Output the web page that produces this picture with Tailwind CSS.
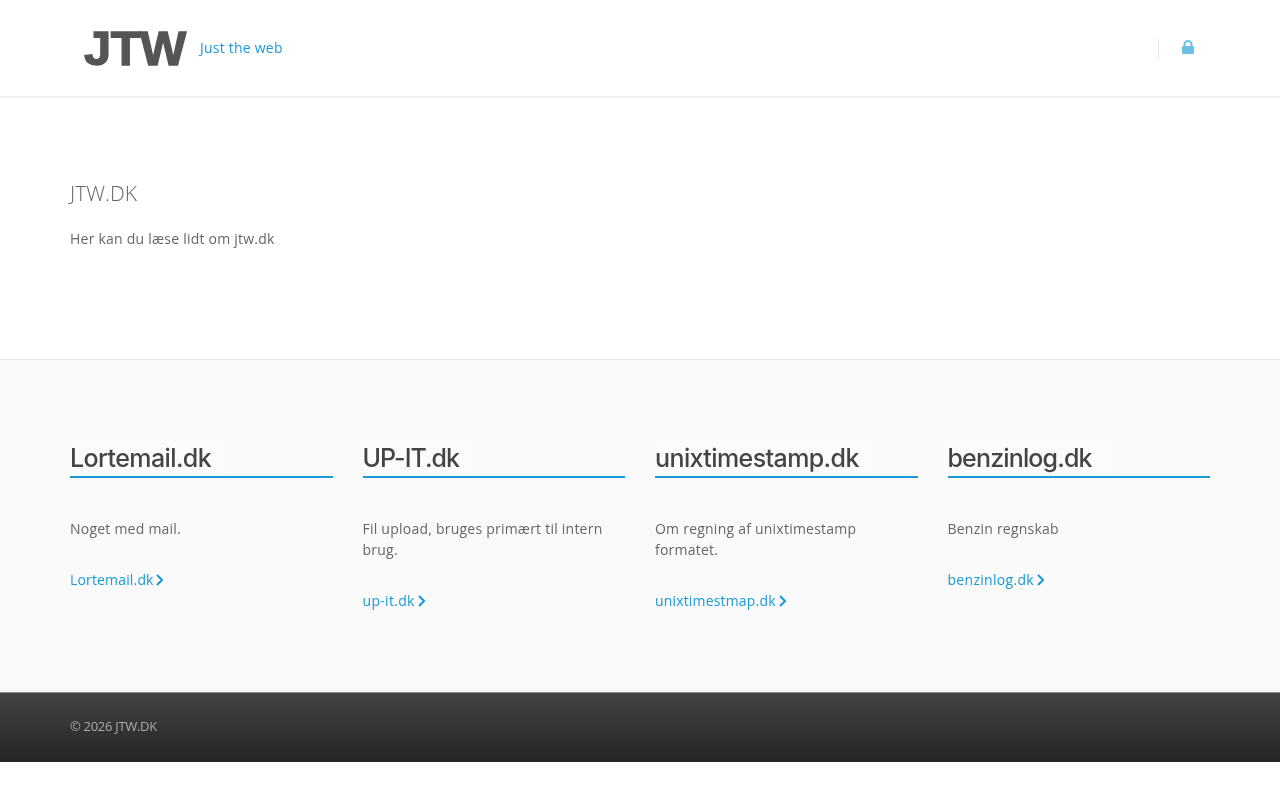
<!DOCTYPE html>
<html lang="da">
<head>
<meta charset="utf-8">
<title>JTW.DK</title>
<script src="https://cdn.jsdelivr.net/npm/@tailwindcss/browser@4"></script>
</head>
<body class="bg-white font-['Open_Sans',sans-serif] text-[14px] leading-[21px] tracking-[0.23px] text-[#666] transform-gpu opacity-[0.999]">
<header class="h-[98px] border-b-2 border-[#f1f1f1] bg-white">
  <div class="mx-auto flex h-[96px] w-[1140px] items-center">
    <span class="ml-[14px] w-[116px] font-['Liberation_Sans',sans-serif] text-[49px] leading-none font-bold tracking-[-0.6px] text-[#555] [-webkit-text-stroke:1.3px_#555]">JTW</span>
    <span class="mb-[2px] text-[#1a9ad6]">Just the web</span>
    <div class="ml-auto mr-[16px] flex h-[20px] translate-y-[1px] items-center border-l border-[#e5e5e5] pl-[23px]">
      <svg class="mb-[4px] h-[14px] w-[12px]" viewBox="0 0 12 14" fill="#6dbfe6"><path d="M1.5 7V4.5a4.5 4.5 0 0 1 9 0V7h-2V4.5a2.5 2.5 0 0 0-5 0V7z"/><rect x="0" y="6" width="12" height="8" rx="1"/></svg>
    </div>
  </div>
</header>
<main class="mx-auto h-[261px] w-[1140px] pt-[80px]">
  <h1 class="text-[21px] leading-[30px] font-light tracking-normal text-[#666]">JTW.DK</h1>
  <p class="mt-[20px]">Her kan du læse lidt om jtw.dk</p>
</main>
<section class="h-[333px] border-t border-[#e5e5e5] bg-[#fafafa]">
  <div class="mx-auto grid w-[1140px] grid-cols-4 gap-x-[30px] pt-[79px]">
    <div>
      <h3 class="border-b-2 border-[#1a9ad6] text-[25px] leading-[35px] font-medium tracking-[-0.6px] text-[#444] font-['Inter',sans-serif]"><span class="inline-block bg-[#fbfbfb] pt-[2px] pr-[16px]">Lortemail.dk</span></h3>
      <p class="mt-[40px]">Noget med mail.</p>
      <a href="#" class="mt-[30px] flex items-center gap-[2px] tracking-[0.16px] text-[#1a9ad6]">Lortemail.dk<svg class="h-[12px] w-[7px]" viewBox="0 0 7 12" fill="none" stroke="#1a9ad6" stroke-width="2"><path d="M1 1l5 5-5 5"/></svg></a>
    </div>
    <div>
      <h3 class="border-b-2 border-[#1a9ad6] text-[25px] leading-[35px] font-medium tracking-[-1px] text-[#444] font-['Inter',sans-serif]"><span class="inline-block bg-[#fbfbfb] pt-[2px] pr-[16px]">UP-IT.dk</span></h3>
      <p class="mt-[40px]">Fil upload, bruges primært til intern brug.</p>
      <a href="#" class="mt-[30px] flex items-center gap-[3px] tracking-[0.3px] text-[#1a9ad6]">up-it.dk<svg class="h-[12px] w-[7px]" viewBox="0 0 7 12" fill="none" stroke="#1a9ad6" stroke-width="2"><path d="M1 1l5 5-5 5"/></svg></a>
    </div>
    <div>
      <h3 class="border-b-2 border-[#1a9ad6] text-[25px] leading-[35px] font-medium tracking-[-0.6px] text-[#444] font-['Inter',sans-serif]"><span class="inline-block bg-[#fbfbfb] pt-[2px] pr-[16px]">unixtimestamp.dk</span></h3>
      <p class="mt-[40px]">Om regning af unixtimestamp formatet.</p>
      <a href="#" class="mt-[30px] flex items-center gap-[3px] tracking-[0.17px] text-[#1a9ad6]">unixtimestmap.dk<svg class="h-[12px] w-[7px]" viewBox="0 0 7 12" fill="none" stroke="#1a9ad6" stroke-width="2"><path d="M1 1l5 5-5 5"/></svg></a>
    </div>
    <div>
      <h3 class="border-b-2 border-[#1a9ad6] text-[25px] leading-[35px] font-medium tracking-[-0.85px] text-[#444] font-['Inter',sans-serif]"><span class="inline-block bg-[#fbfbfb] pt-[2px] pr-[16px]">benzinlog.dk</span></h3>
      <p class="mt-[40px]">Benzin regnskab</p>
      <a href="#" class="mt-[30px] flex items-center gap-[3px] tracking-[0.3px] text-[#1a9ad6]">benzinlog.dk<svg class="h-[12px] w-[7px]" viewBox="0 0 7 12" fill="none" stroke="#1a9ad6" stroke-width="2"><path d="M1 1l5 5-5 5"/></svg></a>
    </div>
  </div>
</section>
<footer class="h-[70px] border-t border-[#888] bg-gradient-to-b from-[#444] to-[#252525]">
  <div class="mx-auto flex h-[67px] w-[1140px] items-center text-[13px] tracking-[-0.3px] text-[#aaa]">© 2026 JTW.DK</div>
</footer>
</body>
</html>
